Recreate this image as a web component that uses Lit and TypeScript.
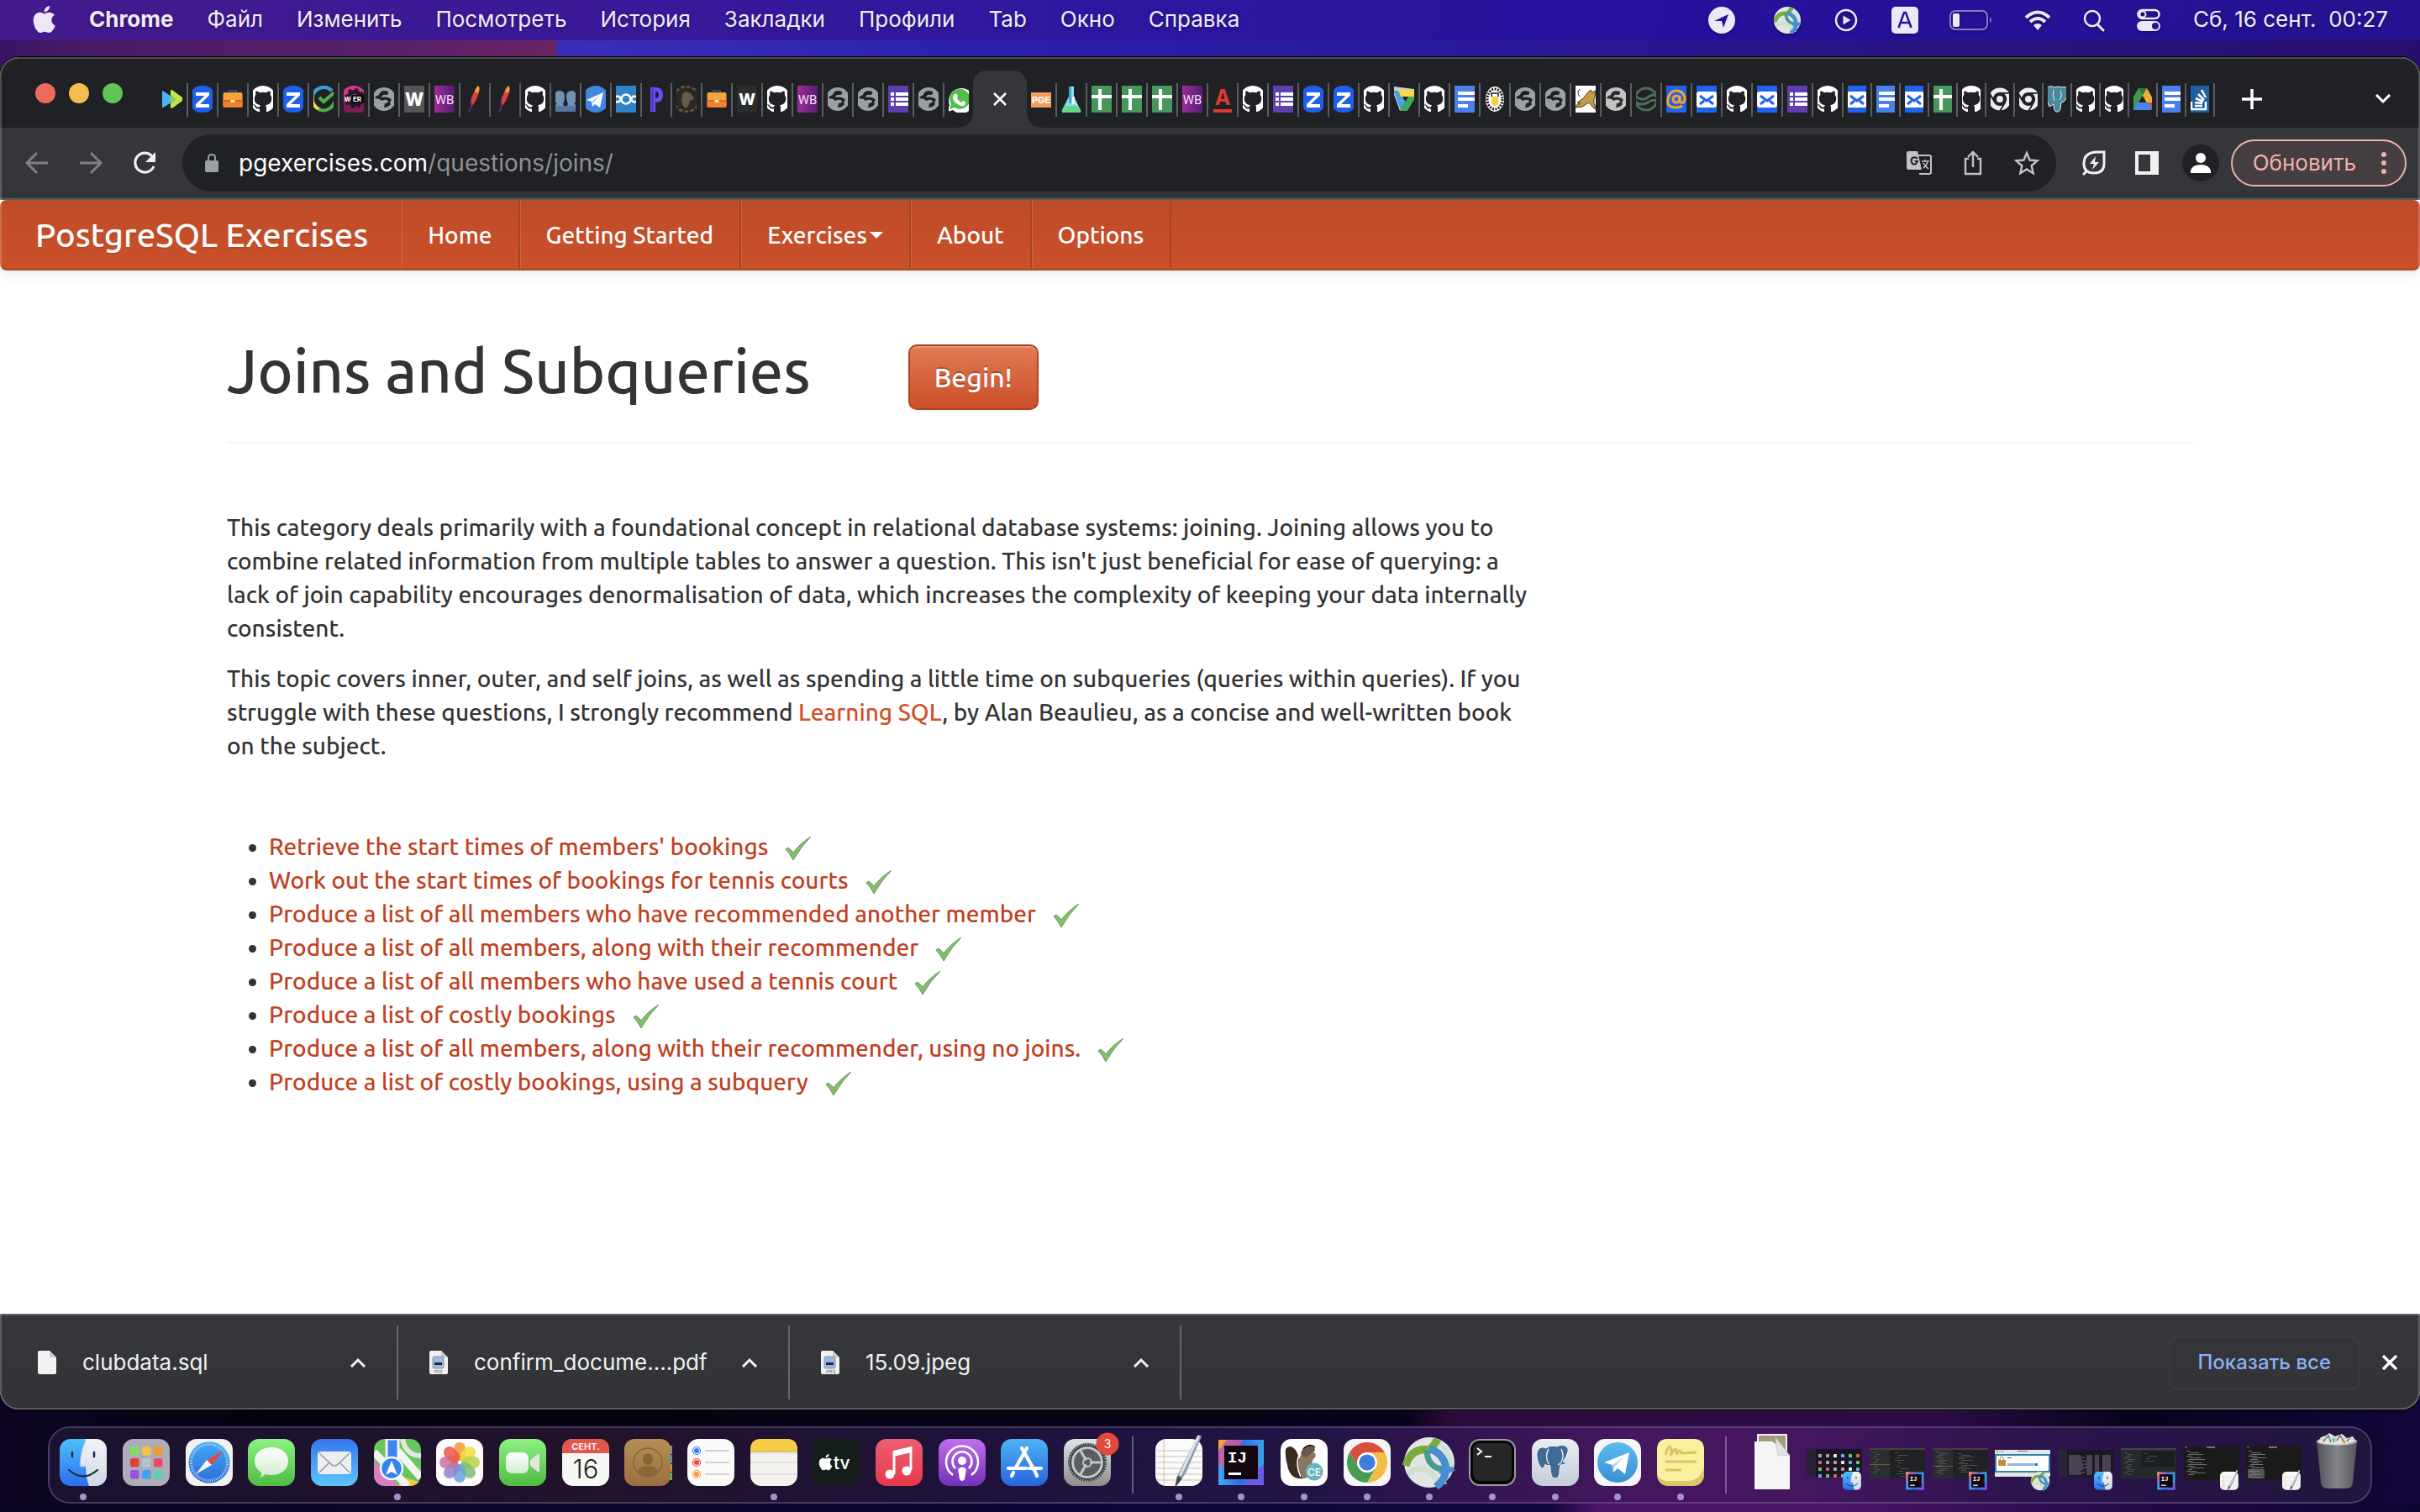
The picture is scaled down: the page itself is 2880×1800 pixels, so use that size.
import { LitElement, html, css, svg, nothing, SVGTemplateResult } from "lit";
import { customElement } from "lit/decorators.js";

const UI = css`"Inter", "Roboto", "Liberation Sans", sans-serif`;

/* ---------- shared artwork ---------- */

const APPLE =
  "M12.152 6.896c-.948 0-2.415-1.078-3.96-1.04-2.04.027-3.91 1.183-4.961 3.014-2.117 3.675-.546 9.103 1.519 12.09 1.013 1.454 2.208 3.09 3.792 3.039 1.52-.065 2.09-.987 3.935-.987 1.831 0 2.35.987 3.96.948 1.637-.026 2.676-1.48 3.676-2.948 1.156-1.688 1.636-3.325 1.662-3.415-.039-.013-3.182-1.221-3.22-4.857-.026-3.04 2.48-4.494 2.597-4.559-1.429-2.09-3.623-2.324-4.39-2.376-2-.156-3.675 1.09-4.61 1.09zM15.53 3.83c.843-1.012 1.4-2.427 1.245-3.83-1.207.052-2.662.805-3.532 1.818-.78.896-1.454 2.338-1.273 3.714 1.338.104 2.715-.688 3.559-1.701";
const OCTOCAT =
  "M8 0C3.58 0 0 3.58 0 8c0 3.54 2.29 6.53 5.47 7.59.4.07.55-.17.55-.38 0-.19-.01-.82-.01-1.49-2.01.37-2.53-.49-2.69-.94-.09-.23-.48-.94-.82-1.13-.28-.15-.68-.52-.01-.53.63-.01 1.08.58 1.23.82.72 1.21 1.87.87 2.33.66.07-.52.28-.87.51-1.07-1.78-.2-3.64-.89-3.64-3.95 0-.87.31-1.59.82-2.15-.08-.2-.36-1.02.08-2.12 0 0 .67-.21 2.2.82.64-.18 1.32-.27 2-.27s1.36.09 2 .27c1.53-1.04 2.2-.82 2.2-.82.44 1.1.16 1.92.08 2.12.51.56.82 1.27.82 2.15 0 3.07-1.87 3.75-3.65 3.95.29.25.54.73.54 1.48 0 1.07-.01 1.93-.01 2.2 0 .21.15.46.55.38A8.01 8.01 0 0 0 16 8c0-4.42-3.58-8-8-8z";
const CHROME_PART = "M-17.32 -10A20 20 0 0 1 17.32 -10L0 -10A10 10 0 0 0 -8.66 5Z";
const ELEPHANT =
  "M18 20c-6-3-12 1-11 10 1 7 4 14 7 14 2 0 2-3 3-5 1 2 3 2 5 1l1 3c0 5 1 13 6 13 4 0 5-5 5-10l1-6c3 0 6-1 8-3-2 0-4 0-5-1 4-5 8-14 5-17-3-3-8-3-12-1-5-1-9-1-13 2Z";

const arc = (id: string, stops: string[], vertical = true) => svg`
  <linearGradient id=${id} x1="0" y1="0" x2=${vertical ? 0 : 1} y2=${vertical ? 1 : 0}>
    ${stops.map((c, i) => svg`<stop offset=${i / (stops.length - 1)} stop-color=${c} />`)}
  </linearGradient>`;

const ball = (x: number, y: number, s: number) => svg`
  <g transform="translate(${x} ${y}) scale(${s})">
    <circle cx="30" cy="30" r="30" fill="#e3e4e4"/>
    <path d="M4 44Q22 30 36 46Q40 54 50 52" fill="none" stroke="#cfe0cf" stroke-width="7"/>
    <path d="M38 4Q54 14 56 34" fill="none" stroke="#cfe3da" stroke-width="5"/>
    <path d="M2 34Q8 12 30 15Q36 10 40 2" fill="none" stroke="#76ad3d" stroke-width="9"/>
    <path d="M27 15Q27 30 38 36Q44 39 52 36" fill="none" stroke="#4a9a8c" stroke-width="7"/>
    <path d="M30 14Q46 18 50 36Q50 50 38 59" fill="none" stroke="#4790cf" stroke-width="9"/>
    <path d="M42 40Q52 42 59 37" fill="none" stroke="#4790cf" stroke-width="6"/>
  </g>`;

/* ---------- favicons, drawn on a 32 x 32 grid ---------- */

const FAV: Record<string, SVGTemplateResult> = {
  arrows: svg`<path d="M3 5l14 9v5L3 27z" fill="#4fb4f5"/><path d="M14 5.5q1-1 2.500 0L28 14q2 2 0 4l-11.500 8.500q-2.500 1-2.500-1z" fill="#c0ea4b"/><path d="M14 11l7 5-7 6z" fill="#8fc95a"/>`,
  z: svg`<rect x="2" y="0" width="28" height="32" rx="12" fill="#1f5fee"/><path d="M8 8h16v3.500L13 22h11v4H8v-4L18.500 12H8z" fill="#fff"/>`,
  brief: svg`<path d="M12 9V6h8v3" fill="none" stroke="#2c4c8c" stroke-width="2"/><rect x="4.500" y="8" width="23" height="18" rx="2" fill="#f5a23a"/><path d="M4.500 18h23v6q0 2-2 2h-19q-2 0-2-2z" fill="#ef8130"/><rect x="4.500" y="17" width="23" height="2" fill="#d9642a"/><rect x="13.500" y="17" width="5" height="3" fill="#ffe9a0"/>`,
  gh: svg`<path d=${OCTOCAT} transform="scale(2)" fill="#fff"/>`,
  check: svg`<path d="M26 6A13.500 13.500 0 0 0 3 14" fill="none" stroke="#3f9be0" stroke-width="4"/><path d="M3 13A13.500 13.500 0 0 0 12 28.500" fill="none" stroke="#eadf45" stroke-width="4"/><path d="M10 28A13.500 13.500 0 0 0 29 19" fill="none" stroke="#4fae48" stroke-width="4"/><path d="M11 14l5 5 13-11" fill="none" stroke="#52b04a" stroke-width="4"/>`,
  weri: svg`<circle cx="16" cy="16" r="16" fill="#d2358f"/><path d="M0 19h32a16 16 0 0 1-32 0z" fill="#7d1d55"/><circle cx="17" cy="15" r="7.500" fill="none" stroke="#231a20" stroke-width="5"/><circle cx="17" cy="15" r="10.500" fill="none" stroke="#231a20" stroke-width="3" stroke-dasharray="4 4.250"/><rect x="13" y="11" width="18" height="10" rx="2" fill="#0b0b0c"/><text x="5" y="19" font-size="7" font-weight="700" fill="#fff">W</text><text x="15" y="19" font-size="8" font-weight="700" fill="#fff">ER</text>`,
  globe: svg`<circle cx="16" cy="16" r="14" fill="#9aa0a6"/><path d="M17 6q-6 0-7 5-4 1-5 4l6 1q1 3 5 1 2-1 5 1 0 3-4 3l-1 5q5 0 8-4-2-2 1-5-2-3-5-3-4-1-7 0 1-4 5-3 4 0 3-4z" fill="#202124"/>`,
  globe2: svg`<circle cx="16" cy="16" r="14" fill="#c3c3c3"/><path d="M17 6q-6 0-7 5-4 1-5 4l6 1q1 3 5 1 2-1 5 1 0 3-4 3l-1 5q5 0 8-4-2-2 1-5-2-3-5-3-4-1-7 0 1-4 5-3 4 0 3-4z" fill="#2c2d2f"/>`,
  w: svg`<rect width="32" height="32" fill="#565656"/><text x="16" y="24" text-anchor="middle" font-size="21" font-weight="800" fill="#fff">W</text>`,
  w2: svg`<rect width="32" height="32" fill="#2c2c2c"/><text x="16" y="23" text-anchor="middle" font-size="19" font-weight="800" fill="#fff">W</text>`,
  wb: svg`<rect width="32" height="32" fill="url(#fwb)"/><text x="16" y="22" text-anchor="middle" font-family="Roboto" font-size="15" fill="#f6dcf6">WB</text>`,
  feather: svg`<path d="M20 0q3 3 0 11-3 9-8 14-2-7 2-15 3-8 6-10z" fill="#d8433a"/><path d="M20 0q3 3 0 9l-4-2q2-5 4-7z" fill="#f0a03a"/><path d="M11 18l1 7-3 6" fill="none" stroke="#5b2c7a" stroke-width="2"/>`,
  people: svg`<path d="M2 31v-4q0-4 4-5-3-3-3-9 0-7 6-7t6 7q0 5-2 9l1 1V31zM18 31v-8l1-1q-2-4-2-9 0-7 6-7t6 7q0 6-3 9 4 1 4 5v4z" fill="#6f93b4"/><path d="M2 31v-5q4-3 10-2l8 0q6-1 10 2v5z" fill="#5577a0"/>`,
  tg: svg`<circle cx="16" cy="16" r="16" fill="#4286e0"/><path d="M5 17L25 8l-4 18-6-4-3 3-1-6z" fill="#fff"/><path d="M11 19l10-8-8 10z" fill="#a9c9f2"/>`,
  node: svg`<rect width="32" height="32" fill="#2f83c5"/><circle cx="16" cy="16" r="5.500" fill="none" stroke="#fff" stroke-width="2.500"/><circle cx="6" cy="16" r="3.500" fill="none" stroke="#fff" stroke-width="2.500"/><circle cx="26" cy="16" r="3.500" fill="none" stroke="#fff" stroke-width="2.500"/>`,
  p: svg`<path d="M9 31V2h6q9 0 9 9t-9 9v11z" fill="#6c4df0"/><path d="M15 7v8q4 0 4-4t-4-4z" fill="#202124"/><path d="M11.500 3v27" stroke="#3f2ab0" stroke-width="1.500"/>`,
  coin: svg`<circle cx="16" cy="16" r="15" fill="#2b2722" stroke="#5c5244" stroke-width="3" stroke-dasharray="5 2"/><path d="M12 8q8-2 11 4l2 4-5 2q-1 7-5 9-8-6-3-19z" fill="#655a49"/>`,
  forms: svg`<rect width="32" height="32" fill="#5f3fae"/><g fill="#fff"><rect x="7" y="8" width="4" height="4"/><rect x="13" y="8" width="15" height="4"/><rect x="7" y="14" width="4" height="4"/><rect x="13" y="14" width="15" height="4"/><rect x="7" y="20" width="4" height="4"/><rect x="13" y="20" width="15" height="4"/></g>`,
  wa: svg`<path d="M2 31l3-8A15 15 0 1 1 9 29z" fill="#fff"/><path d="M5 28l2-6a12 12 0 1 1 4 4z" fill="#4dc247"/><path d="M11 10q2-2 4 2l-1 3q2 4 5 5l2-2q4 1 3 4-3 4-8 1-7-4-7-9 0-3 2-4z" fill="#fff"/>`,
  pge: svg`<rect y="8" width="32" height="18" fill="#f0a05a"/><text x="16" y="21" text-anchor="middle" font-size="11" font-weight="700" fill="#fff">PGE</text>`,
  flask: svg`<path d="M13 1h6v12l8 16q1 3-2 3H7q-3 0-2-3l8-16z" fill="#8fdcf5"/><path d="M8 24h16l3 5q1 3-2 3H7q-3 0-2-3z" fill="#66d68a"/><path d="M13 1h3v20h-3z" fill="#4aa6c9"/><path d="M17 13h3v9h-3z" fill="#e8fbff"/>`,
  sheets: svg`<rect width="32" height="32" fill="#47975b"/><path d="M12 4h4v7h12v4H16v14h-4V15H4v-4h8z" fill="#fff"/>`,
  a: svg`<text x="16" y="23" text-anchor="middle" font-size="25" font-weight="700" fill="#df3a2f">A</text><rect x="5" y="28" width="22" height="4" fill="#df3a2f"/>`,
  tri: svg`<path d="M1 2l10 3 3 24-3 1z" fill="#d7dadf"/><path d="M3 5l9 25 6-10-8-14z" fill="#4aa0e0"/><path d="M9 5h21v8H12z" fill="#fbd74b"/><path d="M30 13l-10 17h-9l10-17z" fill="#3fa75a"/><path d="M3 1l25 3v1H6z" fill="#c9ccd0"/>`,
  docs: svg`<rect width="32" height="32" fill="#4a80ec"/><g fill="#fff"><rect x="8" y="7" width="20" height="4"/><rect x="8" y="14" width="20" height="4"/><rect x="8" y="22" width="12" height="4"/></g>`,
  badge: svg`<ellipse cx="16" cy="16" rx="11" ry="15" fill="#fff"/><ellipse cx="16" cy="16" rx="9" ry="12" fill="none" stroke="#1c1c1c" stroke-width="3" stroke-dasharray="2 1.500"/><path d="M12 13h8v9l-4 2-4-2z" fill="#f4d23c"/><path d="M12 13V9h8v4" fill="none" stroke="#1c1c1c" stroke-width="1.500"/>`,
  cat: svg`<rect width="32" height="32" fill="#fff"/><path d="M6 20q8-4 12-11l4-4 2 3 4-2-1 7q-2 4-1 8l3 8-4-3-5-6-8 5-8 1 5-4z" fill="#c89b4b" stroke="#4a3a20"/><path d="M4 24l6-4M9 4q-4 4 0 9" stroke="#333" fill="none"/>`,
  green: svg`<circle cx="16" cy="16" r="13" fill="none" stroke="#4a7058" stroke-width="3"/><path d="M4 13q8 6 14 1t10-2M4 20q8 4 14 0t10-2" fill="none" stroke="#4a7058" stroke-width="3"/>`,
  at: svg`<rect width="32" height="32" fill="#1f63ee"/><circle cx="16" cy="16" r="4" fill="none" stroke="#f6a623" stroke-width="3"/><path d="M20 12v6q1 3 4 2 3-2 2-6-2-8-10-8T6 16t10 10q4 0 7-2" fill="none" stroke="#f6a623" stroke-width="3"/>`,
  mail: svg`<rect width="32" height="32" fill="#1f63ee"/><rect x="4" y="7" width="24" height="19" rx="3" fill="#fff"/><path d="M8 12l8 6 8-6M8 22l5-4M24 22l-5-4" fill="none" stroke="#1f63ee" stroke-width="3"/>`,
  chrome: svg`<g transform="translate(16 16) scale(.72)"><g fill="#eceded" stroke="#202124" stroke-width="2.500"><path d=${CHROME_PART}/><path d=${CHROME_PART} transform="rotate(120)"/><path d=${CHROME_PART} transform="rotate(240)"/></g><circle r="7" fill="#eceded" stroke="#202124" stroke-width="3"/></g>`,
  pg: svg`<path d="M3 3q5-4 10-1 4-2 8 0 6-2 8 3 1 7-5 14l-3 1-1 7q-1 5-5 4-3-1-3-9l-5 3Q3 18 3 3z" fill="#4b8a9c" stroke="#e8eef2"/><path d="M12 5q-2 7 1 13M20 6q3 6-1 11" fill="none" stroke="#e8eef2"/>`,
  drive: svg`<path d="M11 3h10l10 18H21z" fill="#f2ae34"/><path d="M11 3L0 22l5 8L17 10z" fill="#3c9b4c"/><path d="M11 3h10l-5 8z" fill="#237a3a"/><path d="M5 29l5-9h21l-5 9z" fill="#4a85ee"/><path d="M25 20h6l-5 9z" fill="#dd4a3a"/>`,
  so: svg`<rect width="32" height="32" fill="#215f9e"/><path d="M6 19v9h17v-9M10 24h9M10 20l9 1M11 15l9 4M14 10l7 7M18 5l5 9" fill="none" stroke="#fff" stroke-width="2.500"/>`,
};

const LEFT = "arrows z brief gh z check weri globe w wb feather feather gh people tg node p coin brief w2 gh wb globe globe forms globe wa".split(" ");
const RIGHT = "pge flask sheets sheets sheets wb a gh forms z z gh tri gh docs badge globe globe cat globe2 green at mail gh mail forms gh".split(" ");
const NARROW = "mail docs mail sheets gh chrome chrome pg gh gh drive docs so".split(" ");

/* ---------- menu bar ---------- */

@customElement("menu-bar")
class MenuBar extends LitElement {
  static styles = css`
    :host { display: flex; align-items: center; height: 48px; padding: 0 38px; color: #efecf7;
      font: 400 26px/46px ${UI}; text-shadow: 0 2px 4px rgba(0, 0, 0, 0.3);
      background: linear-gradient(90deg, #431a8c 0%, #3b1a97 22%, #2e17a0 45%, #26119c 70%, #251391 100%); }
    nav, .status { display: flex; align-items: center; }
    nav { gap: 40px; }
    button { all: unset; }
    button, time { padding-bottom: 2px; }
    .app { font-weight: 700; }
    .status { margin-left: auto; }
    svg { display: block; }
    .status svg { filter: drop-shadow(0 2px 2px rgba(0, 0, 0, 0.3)); }
    .g46 { margin-left: 46px; } .g40 { margin-left: 40px; } .g37 { margin-left: 37px; }
    time { white-space: pre; margin-left: 39px; }
  `;
  render() {
    const c = "#ece8f7";
    return html`
      <nav aria-label="Menu">
        <button aria-label="Apple"><svg width="28" height="32" viewBox="1 0 21 24"><path d=${APPLE} fill=${c} /></svg></button>
        <button class="app">Chrome</button>
        ${["Файл", "Изменить", "Посмотреть", "История", "Закладки", "Профили", "Tab", "Окно", "Справка"].map((t) => html`<button>${t}</button>`)}
      </nav>
      <div class="status">
        <svg width="32" height="32" viewBox="0 0 32 32"><circle cx="16" cy="16" r="16" fill=${c} /><path d="M7 17L24 9l-6 16-2-8z" fill="#27129a" /></svg>
        <svg class="g46" width="32" height="32" viewBox="0 0 60 60">${ball(0, 0, 1)}</svg>
        <svg class="g40" width="28" height="28" viewBox="0 0 28 28"><circle cx="14" cy="14" r="12" fill="none" stroke=${c} stroke-width="2.500" /><path d="M10.500 8.500l9 5.500-9 5.500z" fill=${c} /></svg>
        <svg class="g40" width="32" height="32" viewBox="0 0 32 32"><rect width="32" height="32" rx="5" fill=${c} /><path d="M8.500 25L15 7h2l6.500 18M11 19h10" fill="none" stroke="#27129a" stroke-width="2.500" /></svg>
        <svg class="g37" width="52" height="24" viewBox="0 0 52 24"><rect x="1" y="1" width="44" height="22" rx="6" fill="none" stroke="#8578c4" stroke-width="2" /><rect x="4" y="4" width="8" height="16" rx="2" fill=${c} /><path d="M48 8q4 4 0 8z" fill="#8578c4" /></svg>
        <svg class="g37" width="32" height="24" viewBox="0 0 32 24"><g fill="none" stroke=${c} stroke-width="4"><path d="M2 9q14-13 28 0" /><path d="M7 14q9-8 18 0" /></g><path d="M11 18q5-4 10 0l-5 6z" fill=${c} /></svg>
        <svg class="g37" width="28" height="28" viewBox="0 0 28 28"><circle cx="12" cy="12" r="9" fill="none" stroke=${c} stroke-width="2.500" /><path d="M18 19l7 7" stroke=${c} stroke-width="3" stroke-linecap="round" /></svg>
        <svg class="g37" width="28" height="28" viewBox="0 0 28 28"><rect x="1.500" y="2" width="25" height="10" rx="5" fill="none" stroke=${c} stroke-width="2.500" /><circle cx="7" cy="7" r="3.500" fill="none" stroke=${c} stroke-width="2" /><rect y="15" width="28" height="12" rx="6" fill=${c} /><circle cx="22" cy="21" r="4" fill="#27129a" /></svg>
        <time>Сб, 16 сент.  00:27</time>
      </div>`;
  }
}

/* ---------- browser chrome ---------- */

@customElement("tab-strip")
class TabStrip extends LitElement {
  static styles = css`
    :host { display: flex; height: 84px; background: #202124; font-family: ${UI}; }
    button { all: unset; box-sizing: content-box; flex: none; display: flex; align-items: center; justify-content: center; }
    .lights { display: flex; gap: 16px; padding: 31px 42px 0; }
    .lights button { width: 24px; height: 24px; border-radius: 50%; }
    .r { background: #ee6a5f; } .y { background: #f5bd4f; } .g { background: #61c454; }
    .tab { width: 34px; height: 40px; margin-top: 31px; border-right: 2px solid #5c5d60; }
    .tab svg { display: block; overflow: hidden; margin-top: -2px; }
    .narrow { width: 32px; }
    .last { border: 0; }
    .active { position: relative; width: 64px; height: 68px; margin-top: 16px; border-radius: 16px 16px 0 0; background: #35363a; }
    .active::before, .active::after { content: ""; position: absolute; bottom: 0; width: 16px; height: 16px; }
    .active::before { right: 100%; background: radial-gradient(circle at 0 0, #202124 15px, #35363a 16px); }
    .active::after { left: 100%; background: radial-gradient(circle at 100% 0, #202124 15px, #35363a 16px); }
    .plus { margin: 16px 0 0 28px; width: 32px; }
    .more { margin: 16px 28px 0 auto; width: 32px; }
  `;
  tab(name: string, cls = "") {
    return html`<button class="tab ${cls}" aria-label="Tab">
      <svg width=${cls === "narrow" ? 22 : 24} height="32" viewBox=${cls === "narrow" ? "5 0 22 32" : "4 0 24 32"}>
        <defs>${arc("fwb", ["#a9309b", "#471a72"], false)}</defs>${FAV[name]}
      </svg>
    </button>`;
  }
  render() {
    return html`
      <div class="lights"><button class="r" aria-label="Close"></button><button class="y" aria-label="Minimise"></button><button class="g" aria-label="Zoom"></button></div>
      ${LEFT.map((n, i) => this.tab(n, i === LEFT.length - 1 ? "last" : ""))}
      <button class="active" aria-label="Close tab"><svg width="16" height="16" viewBox="0 0 16 16"><path d="M1 1l14 14M15 1L1 15" stroke="#fff" stroke-width="2.500" /></svg></button>
      ${RIGHT.map((n) => this.tab(n))} ${NARROW.map((n) => this.tab(n, "narrow"))}
      <button class="plus" aria-label="New tab"><svg width="24" height="24" viewBox="0 0 24 24"><path d="M12 0v24M0 12h24" stroke="#fff" stroke-width="3.500" /></svg></button>
      <button class="more" aria-label="Search tabs"><svg width="20" height="12" viewBox="0 0 20 12"><path d="M2 1l8 8 8-8" fill="none" stroke="#fff" stroke-width="3" /></svg></button>`;
  }
}

@customElement("tool-bar")
class ToolBar extends LitElement {
  static styles = css`
    :host { display: flex; align-items: center; height: 84px; padding: 0 16px 0 28px; background: #35363a;
      border-bottom: 2px solid #5f6063; font: 400 28px/36px ${UI}; }
    button { all: unset; flex: none; }
    svg { display: block; flex: none; }
    .nav { margin-right: 32px; }
    .omni { display: flex; align-items: center; flex: 1; height: 68px; border-radius: 34px; background: #202124;
      padding: 0 20px 0 26px; margin: 0 30px 0 -3px; }
    .url { flex: 1; margin-left: 23px; color: #8f9194; }
    .url b { font-weight: 400; color: #fff; }
    .in { margin-left: 35px; }
    .out { margin-right: 34px; }
    .who { width: 44px; height: 44px; border-radius: 50%; background: #202124; display: grid; place-items: center; margin: 0 14px 0 -6px; }
    .update { display: flex; align-items: center; gap: 30px; box-sizing: border-box; height: 56px; padding: 0 22px 0 24px;
      border: 2px solid #efb2aa; border-radius: 28px; background: #463f42; color: #efb2aa; font-size: 26px; }
  `;
  render() {
    return html`
      <button class="nav" aria-label="Back"><svg width="32" height="32" viewBox="0 0 32 32"><path d="M29 16H5M16 4L4 16l12 12" fill="none" stroke="#7f8083" stroke-width="3" /></svg></button>
      <button class="nav" aria-label="Forward"><svg width="32" height="32" viewBox="0 0 32 32"><path d="M3 16h24M16 4l12 12-12 12" fill="none" stroke="#7f8083" stroke-width="3" /></svg></button>
      <button class="nav" aria-label="Reload"><svg width="32" height="32" viewBox="0 0 32 32"><path d="M25 8A11.500 11.500 0 1 0 27 20" fill="none" stroke="#f1f1f2" stroke-width="3.200" /><path d="M29 3v12H17z" fill="#f1f1f2" /></svg></button>
      <div class="omni">
        <svg width="18" height="22" viewBox="0 0 18 22"><rect x="1" y="8" width="16" height="14" rx="2" fill="#9aa0a6" /><path d="M5 9V5q0-4 4-4t4 4v4" fill="none" stroke="#9aa0a6" stroke-width="2" /></svg>
        <span class="url"><b>pgexercises.com</b>/questions/joins/</span>
        <button class="in" aria-label="Translate"><svg width="30" height="30" viewBox="0 0 30 30"><path d="M14 6h13q2 0 2 2v18q0 2-2 2H15" fill="none" stroke="#c2c3c5" stroke-width="2" /><path d="M2 1h11l5 22H2q-2 0-2-2V3q0-2 2-2z" fill="#c2c3c5" /><path d="M13 10q-3-3-6-1-3 3 0 7 4 2 6-3H9.500" fill="none" stroke="#202124" stroke-width="2" /><path d="M18 13h9M22 11v2M25 13q-1 5-5 8M20 15q2 4 6 7" fill="none" stroke="#c2c3c5" stroke-width="1.600" /></svg></button>
        <button class="in" aria-label="Share"><svg width="28" height="30" viewBox="0 0 28 30"><path d="M9 10H5v18h18V10h-4M14 20V3M8 8l6-6 6 6" fill="none" stroke="#c2c3c5" stroke-width="2.400" /></svg></button>
        <button class="in" aria-label="Bookmark"><svg width="30" height="30" viewBox="0 0 30 30"><path d="M15 3l3.500 8.500 9 .8-6.800 6 2 9L15 22.500 7.300 27.300l2-9-6.800-6 9-.8z" fill="none" stroke="#c2c3c5" stroke-width="2.400" /></svg></button>
      </div>
      <button class="out" aria-label="Energy saver"><svg width="30" height="30" viewBox="0 0 30 30"><path d="M27 2v14q0 11-12 11Q3 27 3 16 3 2 19 2z" fill="none" stroke="#f1f1f2" stroke-width="3" /><path d="M7 24l-5 5" stroke="#f1f1f2" stroke-width="3" /><path d="M17 7l-7 9h5l-2 7 8-9h-5z" fill="#f1f1f2" /></svg></button>
      <button class="out" aria-label="Side panel"><svg width="28" height="28" viewBox="0 0 28 28"><path d="M0 0h28v28H0zM4 4v20h14V4z" fill="#f1f1f2" fill-rule="evenodd" /></svg></button>
      <button class="who" aria-label="Profile"><svg width="26" height="26" viewBox="0 0 26 26"><circle cx="13" cy="7" r="6" fill="#fff" /><path d="M1 25v-3q2-7 12-7t12 7v3z" fill="#fff" /></svg></button>
      <button class="update">Обновить<svg width="6" height="28" viewBox="0 0 6 28"><g fill="#efb2aa"><circle cx="3" cy="4" r="3" /><circle cx="3" cy="14" r="3" /><circle cx="3" cy="24" r="3" /></g></svg></button>`;
  }
}

/* ---------- web page ---------- */

const EXERCISES = [
  "Retrieve the start times of members' bookings",
  "Work out the start times of bookings for tennis courts",
  "Produce a list of all members who have recommended another member",
  "Produce a list of all members, along with their recommender",
  "Produce a list of all members who have used a tennis court",
  "Produce a list of costly bookings",
  "Produce a list of all members, along with their recommender, using no joins.",
  "Produce a list of costly bookings, using a subquery",
];

@customElement("joins-page")
class JoinsPage extends LitElement {
  static styles = css`
    :host { display: block; background: #fff; color: #333; font: 460 28px/40px "Ubuntu", "Noto Sans", "Open Sans", sans-serif; }
    a { color: #c0401f; text-decoration: none; }
    .bar { display: flex; align-items: stretch; height: 82px; border-bottom: 2px solid #b04825; border-radius: 8px;
      background: linear-gradient(#be4b28, #ca512b); box-shadow: 0 2px 16px rgba(0, 0, 0, 0.12); }
    .bar a { display: flex; align-items: center; padding: 2px 31px 0; color: #fff; border-right: 2px solid #a9431f; box-shadow: inset 1px 0 #cf6643; }
    .bar a.brand { padding: 2px 40px 0 42px; font-size: 40px; border: 0; box-shadow: none; text-shadow: 0 2px 0 rgba(0, 0, 0, 0.1); }
    .caret { margin-left: 3px; border: 8px solid transparent; border-top-color: #fff; border-bottom: 0; }
    main { max-width: 2340px; margin: 0 auto; padding-top: 76px; }
    header { display: flex; align-items: flex-start; gap: 116px; height: 128px; border-bottom: 2px solid #f5f5f5; }
    h1 { margin: 0; font-size: 72px; line-height: 88px; font-weight: 460; }
    .begin { all: unset; box-sizing: border-box; height: 78px; margin-top: 12px; padding: 0 29px; border: 2px solid #ad4522; border-radius: 10px; color: #fff;
      font-size: 32px; line-height: 74px; text-shadow: 0 -2px 0 rgba(0, 0, 0, 0.25);
      background: linear-gradient(#e07b55, #cb4f27); box-shadow: inset 0 2px 0 rgba(255, 255, 255, 0.2), 0 2px 4px rgba(0, 0, 0, 0.05); }
    .intro { width: 1560px; max-width: 100%; margin-top: 80px; }
    p { margin: 0 0 20px; }
    .intro a { color: #d0502a; }
    ul { margin: 80px 0 0; padding-left: 50px; }
    li svg { margin-left: 21px; vertical-align: -6px; }
  `;
  render() {
    return html`
      <nav class="bar">
        <a class="brand" href="#">PostgreSQL Exercises</a>
        <a href="#">Home</a><a href="#">Getting Started</a><a href="#">Exercises<span class="caret"></span></a><a href="#">About</a><a href="#">Options</a>
      </nav>
      <main>
        <header><h1>Joins and Subqueries</h1><button class="begin">Begin!</button></header>
        <div class="intro">
          <p>This category deals primarily with a foundational concept in relational database systems: joining. Joining allows you to<br />combine related information from multiple tables to answer a question. This isn't just beneficial for ease of querying: a<br />lack of join capability encourages denormalisation of data, which increases the complexity of keeping your data internally<br />consistent.</p>
          <p>This topic covers inner, outer, and self joins, as well as spending a little time on subqueries (queries within queries). If you<br />struggle with these questions, I strongly recommend <a href="#">Learning SQL</a>, by Alan Beaulieu, as a concise and well-written book<br />on the subject.</p>
        </div>
        <ul>
          ${EXERCISES.map((t) => html`<li><a href="#">${t}</a><svg width="30" height="28" viewBox="0 0 30 28"><path d="M0 15l3-2q4 3 6 6Q17 8 30 0 18 12 9 28 5 20 0 15z" fill="#83be6c" stroke="#5f9a5a" /></svg></li>`)}
        </ul>
      </main>`;
  }
}

/* ---------- downloads ---------- */

@customElement("download-shelf")
class DownloadShelf extends LitElement {
  static styles = css`
    :host { display: flex; align-items: center; height: 112px; border-top: 2px solid #5f6063; background: linear-gradient(#36373b, #323336); color: #f1f1f2; font: 400 26px/36px ${UI}; }
    button { all: unset; flex: none; }
    svg { display: block; flex: none; }
    .item { display: flex; align-items: center; box-sizing: border-box; width: 466px; height: 88px; padding: 0 36px 0 37px; border-right: 2px solid #67686b; }
    .item:first-child { width: 474px; padding-left: 45px; }
    .name { flex: 1; margin-left: 31px; }
    .all { margin-left: auto; box-sizing: border-box; height: 64px; padding: 0 32px; border: 2px solid #3a3c40; border-radius: 8px; font-size: 24px; font-weight: 500; line-height: 58px; color: #8ab0f5; }
    .close { margin: 0 26px; }
  `;
  render() {
    const files: [string, string][] = [["clubdata.sql", ""], ["confirm_docume....pdf", "PDF"], ["15.09.jpeg", "JPEG"]];
    return html`
      ${files.map(
        ([n, kind]) => html`<div class="item">
          <svg width="22" height="28" viewBox="0 0 22 28"><path d="M2 0h12l8 8v18q0 2-2 2H2q-2 0-2-2V2q0-2 2-2z" fill="#f2f2f2" /><path d="M14 0l8 8h-8z" fill="#c9c9c9" />
            ${kind ? svg`<rect x="4" y="7" width="13" height="14" rx="2" fill="#9bb9e6" stroke="#8a8f98"/><rect x="6" y="14" width="9" height="3" fill="#1d2430"/><text x="11" y="27" text-anchor="middle" font-size="5" fill="#666">${kind}</text>` : nothing}
          </svg>
          <span class="name">${n}</span>
          <button aria-label="Options"><svg width="20" height="12" viewBox="0 0 20 12"><path d="M2 11l8-8 8 8" fill="none" stroke="#f1f1f2" stroke-width="3" /></svg></button>
        </div>`
      )}
      <button class="all">Показать все</button>
      <button class="close" aria-label="Close"><svg width="20" height="20" viewBox="0 0 20 20"><path d="M2 2l16 16M18 2L2 18" stroke="#fff" stroke-width="3.200" /></svg></button>`;
  }
}

/* ---------- dock, icons drawn on a 56 x 56 grid ---------- */

const tile = (fill: string) => svg`<rect width="56" height="56" rx="13" fill=${fill} />`;
const rotated = (n: number, f: (a: number, i: number) => SVGTemplateResult) => Array.from({ length: n }, (_, i) => f((360 / n) * i, i));
const GRID = ["#7ee05f", "#f5c33c", "#ef9a2f", "#e0423a", "#b7c3cb", "#f0466a", "#9a51e0", "#3ba5f2", "#5ed0b0"];
const PETALS = ["#f29b38", "#f0dc3e", "#b9d24a", "#7cbf75", "#66a8dc", "#8f84cf", "#c9719f", "#ea5a45"];

const finder = svg`
  <clipPath id="tileclip"><rect width="56" height="56" rx="13" /></clipPath>
  <g clip-path="url(#tileclip)"><rect width="56" height="56" fill="url(#blue)"/><path d="M31 0Q24 16 24 33h7q0 12 4 23h21V0z" fill="url(#paper)"/></g>
  <path d="M15 16v5M41 16v5" stroke="#1c2a40" stroke-width="2.500" stroke-linecap="round"/><path d="M11 37q17 15 34 0" fill="none" stroke="#1c2a40" stroke-width="2.200" stroke-linecap="round"/>
  <path d="M31 2Q24 16 24 33h7" fill="none" stroke="#8ab4e0" stroke-width="1"/>`;

const idea = svg`
  <rect x="1" y="1" width="54" height="54" fill="url(#idea)"/><path d="M1 1h30L8 34l-7-4z" fill="#f0508a" opacity=".7"/><path d="M1 1h10L1 14z" fill="#f9a13a"/><path d="M30 55h25V30z" fill="#6a5ae8"/>
  <rect x="8" y="8" width="40" height="40" fill="#14060f"/>
  <text x="12" y="28" font-family="Liberation Mono" font-weight="700" font-size="19" fill="#fff">IJ</text><rect x="13" y="40" width="15" height="3" fill="#fff"/>`;

const sheet = svg`
  ${tile("#fbfbfa")}<path d="M1 14h54M1 21h54M1 28h54M1 35h54M1 42h54M1 49h54" stroke="#c4c4c4" stroke-width="1.200"/><path d="M10 0v56" stroke="#f0a9a0"/>
  <path d="M51-5l4 2-19 44-9 13-2 4 2-16z" fill="#8a9cab"/><path d="M50-4L28 43l3 1L53-3z" fill="#d8e2ea"/><path d="M26 44l-3 14 9-11z" fill="#4a4a4a"/>`;

const DOCK: Record<string, SVGTemplateResult> = {
  finder,
  launchpad: svg`${tile("#aeacb8")}${GRID.map((c, i) => svg`<rect x=${9 + (i % 3) * 14} y=${9 + Math.floor(i / 3) * 14} width="10.500" height="10.500" rx="2.500" fill=${c}/>`)}`,
  safari: svg`${tile("#f1f1f1")}<circle cx="28" cy="28" r="24.500" fill="url(#safari)"/><circle cx="28" cy="28" r="21.500" fill="none" stroke="#cfe5fa" stroke-width="3" stroke-dasharray=".8 1.450"/><path d="M45 14L31 31l-6-6z" fill="#e5463c"/><path d="M12 42l13-17 6 6z" fill="#f5f7fa"/>`,
  messages: svg`${tile("url(#green)")}<path d="M28 10c12 0 20 7 20 16.500S40 43 28 43q-4 0-7-1-3 3-7 4 3-3 2-6-8-5-8-13.500C8 17 16 10 28 10z" fill="url(#snow)"/>`,
  mail: svg`${tile("url(#mail)")}<rect x="8" y="15" width="40" height="27" rx="4" fill="#eceef0"/><path d="M10 17l15 14q3 2 6 0l15-14M10 40l12-12M46 40L34 28" fill="none" stroke="#9a9da3" stroke-width="1.600"/>`,
  maps: svg`<g clip-path="url(#tileclip)"><rect width="56" height="56" fill="#68c65f"/><path d="M0 26l30 30H0z" fill="#d97fc0"/><path d="M30 56V44L56 52v4z" fill="#f7c843"/><path d="M0 16l40 40M28 14l28 32" stroke="#f4f4f0" stroke-width="9"/><path d="M34 0q4 20 22 20" fill="none" stroke="#e4e4e0" stroke-width="6"/><path d="M15 0h14v24H15z" fill="#3d86f0" stroke="#f4f4f0" stroke-width="3"/></g><circle cx="21" cy="35" r="13" fill="#3583f3" stroke="#f6f6f6" stroke-width="2.500"/><path d="M21 26l7 17-7-4-7 4z" fill="#fff"/>`,
  photos: svg`${tile("#fcfcfc")}<g transform="translate(28 28)">${rotated(8, (a, i) => svg`<rect x="-7" y="-24" width="14" height="22" rx="7" fill=${PETALS[i]} opacity=".86" transform="rotate(${a})"/>`)}</g>`,
  facetime: svg`${tile("url(#green)")}<rect x="8" y="16" width="27" height="25" rx="7" fill="url(#snow)"/><path d="M37 25l9-7q2-1 2 1v19q0 2-2 1l-9-7z" fill="#dfe9dd"/>`,
  calendar: svg`${tile("#f7f7f5")}<path d="M0 17V13Q0 0 13 0h30q13 0 13 13v4z" fill="#e2574d"/><text x="28" y="13" text-anchor="middle" font-size="11" font-weight="700" fill="#fbeeee">СЕНТ.</text><text x="28" y="47" text-anchor="middle" font-size="31" font-weight="300" fill="#222">16</text>`,
  contacts: svg`<rect x="40" y="8" width="17" height="10" fill="#8a8a8a"/><rect x="40" y="19" width="17" height="10" fill="#4a93c9"/><rect x="40" y="30" width="17" height="9" fill="#e58a2e"/><rect x="40" y="40" width="17" height="9" fill="#5ab55a"/><rect width="55" height="56" rx="12" fill="url(#leather)"/><circle cx="28" cy="28" r="17" fill="none" stroke="#86673a" stroke-width="1.500"/><ellipse cx="28" cy="24" rx="6" ry="7" fill="#86673a"/><path d="M15 39q4-7 13-7t13 7q-5 6-13 6t-13-6z" fill="#86673a"/>`,
  reminders: svg`${tile("#fafaf9")}${["#2f7ff3", "#e8473e", "#f0992e"].map((c, i) => svg`<circle cx="11" cy=${14 + i * 14} r="4.500" fill="none" stroke=${c} stroke-width="1.200"/><circle cx="11" cy=${14 + i * 14} r="3" fill=${c}/><path d="M21 ${14 + i * 14}h29" stroke="#c4c4c2" stroke-width="1.500"/>`)}`,
  notes: svg`${tile("#f3f2ee")}<path d="M0 15V13Q0 0 13 0h30q13 0 13 13v2z" fill="#f8cd45"/><path d="M0 15h56" stroke="#c7a23a"/><path d="M0 17h56" stroke="#b9b9b6" stroke-dasharray="1 1.500"/><path d="M0 28h56M0 42h56" stroke="#cfcecb"/>`,
  tv: svg`${tile("#151e1b")}<path d=${APPLE} transform="translate(6 18) scale(.8)" fill="#fff"/><text x="25" y="36" font-size="21" font-weight="500" fill="#fff">tv</text>`,
  music: svg`${tile("url(#red)")}<path d="M22 42V16l20-5v26" fill="none" stroke="#fff" stroke-width="3"/><path d="M21 14l22-5v7l-22 5z" fill="#fff"/><circle cx="17" cy="42" r="5.500" fill="#fff"/><circle cx="37" cy="38" r="5.500" fill="#fff"/>`,
  podcasts: svg`${tile("url(#violet)")}<g fill="none" stroke="#fff" stroke-width="2.600"><path d="M17 43a19 19 0 1 1 22 0"/><path d="M20 35a11.500 11.500 0 1 1 16 0"/></g><circle cx="28" cy="26" r="5" fill="#fff"/><path d="M23 36q5-5 10 0l-2 12q-3 4-6 0z" fill="#fff"/>`,
  store: svg`${tile("url(#store)")}<path d="M31 11L18 34M25 11l16 28M9 35h21M34 35h14M15 40l-2 4M41 39l2 5" stroke="#fff" stroke-width="4.200" stroke-linecap="round"/>`,
  settings: svg`${tile("url(#steel)")}<circle cx="28" cy="28" r="23" fill="#35383a"/><circle cx="28" cy="28" r="22" fill="none" stroke="#9a9da0" stroke-width="3" stroke-dasharray="1.500 1.500"/><circle cx="28" cy="28" r="17.500" fill="#5b5e60" stroke="#c3c6c8" stroke-width="3"/><circle cx="28" cy="28" r="5" fill="none" stroke="#c3c6c8" stroke-width="2"/><g transform="translate(28 28)" stroke="#c3c6c8" stroke-width="3">${rotated(3, (a) => svg`<path d="M3 0h15" transform="rotate(${a})"/>`)}</g><circle cx="52" cy="6" r="13.500" fill="#e0493c"/><text x="52" y="11" text-anchor="middle" font-size="14" fill="#fff">3</text>`,
  textedit: sheet,
  idea,
  beaver: svg`${tile("#fff")}<path d="M6 12q6-7 13 3 5 10 2 20 2 8 6 12-16 2-19-16Q5 20 6 12z" fill="#3a2a22"/><path d="M22 24q3-9 10-12l9 5q2 4-2 7-3 6-2 12-2 12-10 11-9-8-5-23z" fill="#8b7563"/><path d="M24 17q3-9 11-10 6 1 6 7l-7 5q-2 4-7 2z" fill="#6b5748"/><path d="M27 12q8-8 14-2" fill="none" stroke="#1f1712" stroke-width="1.500"/><path d="M21 21q-3 12 3 24" fill="none" stroke="#fff" stroke-width="1.500"/><circle cx="40" cy="39" r="10.500" fill="#68b3bf"/><text x="40" y="44" text-anchor="middle" font-size="12" font-weight="500" fill="#fff">CE</text>`,
  chrome: svg`${tile("#f6f6f6")}<g transform="translate(28 28) scale(1.200)"><path d=${CHROME_PART} fill="#d94f3d"/><path d=${CHROME_PART} transform="rotate(120)" fill="#f3bc45"/><path d=${CHROME_PART} transform="rotate(240)" fill="#469b55"/><circle r="9.800" fill="#fff"/><circle r="8" fill="#3f7ee0"/></g>`,
  ball: svg`${ball(-2, -2, 1)}`,
  terminal: svg`${tile("#9b9da0")}<rect x="2" y="2" width="52" height="52" rx="11" fill="#050505"/><rect x="5" y="5" width="46" height="45" rx="8" fill="#262626"/><path d="M10 11l5 4-5 4M19 21h8" fill="none" stroke="#fff" stroke-width="2"/>`,
  pg: svg`${tile("url(#pgbg)")}<g transform="translate(-1 -9)"><path d=${ELEPHANT} fill="#3f6a94" stroke="#fff" stroke-width=".8"/><path d="M21 21q-5 8 0 18M36 21q4 8 0 16l-4 3" fill="none" stroke="#dfe8f0" stroke-width="1.500"/></g>`,
  telegram: svg`${tile("#f5f6f8")}<circle cx="28" cy="28" r="24" fill="url(#tele)"/><path d="M12 28L42 16l-5 26-9-7-5 5-1-9z" fill="#fff"/><path d="M22 31l15-11-12 13-2 7z" fill="#b9d8ee"/>`,
  stickies: svg`${tile("#d8c66a")}<path d="M13 0h30q13 0 13 13v20Q52 50 36 50H13Q0 50 0 37V13Q0 0 13 0z" fill="#faf0a0"/><path d="M10 19q4-13 6-9t0 10q6-12 7-6t1 3q4-6 5 0l18-1M10 27h37M10 37h19" fill="none" stroke="#d9c660" stroke-width="3"/>`,
};

const GROUP_A: [string, boolean][] = [["finder", true], ["launchpad", false], ["safari", false], ["messages", false], ["mail", false], ["maps", true], ["photos", false], ["facetime", false], ["calendar", false], ["contacts", false], ["reminders", false], ["notes", true], ["tv", false], ["music", false], ["podcasts", false], ["store", false], ["settings", false]];
const GROUP_B = ["textedit", "idea", "beaver", "chrome", "ball", "terminal", "pg", "telegram", "stickies"];

const code = (x: number, y: number, rows: number, max: number, color: string, step = 2) =>
  Array.from({ length: rows }, (_, i) => svg`<rect x=${x + ((i * 5) % 3) * 2} y=${y + i * step} width=${4 + ((i * 7) % max)} height="1" fill=${color} opacity=".55"/>`);
const badge = (art: SVGTemplateResult) => svg`<g transform="translate(43 27) scale(.39)">${art}</g>`;

const MINIS: SVGTemplateResult[] = [
  svg`<rect y="0" width="66" height="33" fill="#1b1626"/><rect width="11" height="33" fill="#292236"/>${Array.from({ length: 24 }, (_, i) => svg`<rect x=${14 + (i % 6) * 9} y=${6 + Math.floor(i / 6) * 8} width="4" height="4" rx="1" fill=${["#aaa", "#d9685a", "#5fd05f", "#5ab4ea", "#e8e8e8", "#c98"][(i * 5 + Math.floor(i / 6)) % 6]}/>`)}${badge(finder)}`,
  svg`<rect y="-1" width="66" height="36" fill="#1f2124"/><rect y="-1" width="24" height="36" fill="#2b2d30"/><rect y="-1" width="66" height="2" fill="#3d4a35"/>${code(4, 4, 13, 7, "#6b6d70")}${code(30, 4, 5, 14, "#9a7a4f", 3)}${code(32, 20, 5, 12, "#5f7a8a", 3)}<rect y="18" width="24" height="1" fill="#7a5a2a"/>${badge(idea)}`,
  svg`<rect y="-1" width="66" height="36" fill="#1f2124"/><rect y="-1" width="24" height="36" fill="#2b2d30"/><rect y="-1" width="66" height="2" fill="#5a3540"/>${code(4, 3, 14, 9, "#6b6d70")}${code(30, 5, 12, 17, "#777a6a")}<rect y="20" width="24" height="1" fill="#7a5a2a"/>${badge(idea)}`,
  svg`<rect y="1" width="66" height="32" rx="1" fill="#e3e6e6"/><rect y="6" width="66" height="22" fill="#2f86a3"/><rect x="2" y="8" width="62" height="18" rx="1" fill="#fff"/><circle cx="3" cy="3" r="1" fill="#e55"/><circle cx="6" cy="3" r="1" fill="#ea3"/><circle cx="9" cy="3" r="1" fill="#5b5"/><rect x="4" y="13" width="9" height="7" fill="#c98b3a"/><path d="M6 13q0-4 2-4t3 4" fill="none" stroke="#8a8a8a"/><rect x="15" y="17" width="36" height="3" fill="#8fb8e8"/><rect x="48" y="17" width="3" height="3" fill="#2f6fe0"/><rect x="27" y="2" width="12" height="1" fill="#777"/><rect x="15" y="10" width="5" height="1" fill="#555"/><g transform="translate(43 27) scale(.370)">${ball(0, 0, 1)}</g>`,
  svg`<rect y="1" width="66" height="32" fill="#1d1828"/><rect y="1" width="11" height="32" fill="#2b2438"/>${Array.from({ length: 12 }, (_, i) => svg`<path d="M13 ${8 + i * 2}h${14 + (i * 5) % 9}M34 ${8 + i * 2}h7M44 ${8 + i * 2}h5M53 ${8 + i * 2}h10" stroke="#8a8496" stroke-width=".8"/>`)}${badge(finder)}`,
  svg`<rect y="-1" width="66" height="36" fill="#26292c"/><rect x="24" y="3" width="40" height="18" fill="#1b1d20"/><rect y="-1" width="66" height="2" fill="#3a4650"/>${code(4, 4, 14, 6, "#6b6d70")}${code(28, 5, 4, 13, "#7a7c6a", 3)}${badge(idea)}`,
  svg`<rect y="-3" width="66" height="40" fill="#1a1a1a"/><path d="M1-2h3" stroke="#e55"/><path d="M27-2h10" stroke="#ccc"/>${code(3, 2, 15, 19, "#b5b5b5")}${badge(sheet)}`,
  svg`<rect y="-3" width="66" height="40" fill="#1a1a1a"/><path d="M1-2h3" stroke="#e55"/><path d="M27-2h10" stroke="#ccc"/>${code(3, 2, 17, 15, "#c0c0c0")}<rect x="2" y="24" width="20" height="11" fill="#7a7a7a" opacity=".6"/>${badge(sheet)}`,
];

@customElement("app-dock")
class AppDock extends LitElement {
  static styles = css`
    :host { display: flex; box-sizing: border-box; margin: 20px 57px 10px; height: 92px; padding: 0 3px; border: 2px solid rgba(160, 140, 200, 0.32); border-radius: 26px; font-family: ${UI};
      background: linear-gradient(90deg, #1a1230 0%, #22122a 24%, #1e1238 38%, #231446 55%, #44165e 68%, #43165f 76%, #2c144c 85%, #20153e 100%); }
    button { all: unset; flex: 1; display: flex; flex-direction: column; align-items: center; padding-top: 13px; }
    svg { display: block; overflow: visible; }
    .dot { width: 8px; height: 8px; margin-top: 9px; border-radius: 50%; background: #a294c8; }
    .sep { width: 2px; margin: 10px 16px; background: rgba(180, 160, 215, 0.5); }
    .defs { position: absolute; }
  `;
  icon(name: string, running: boolean) {
    return html`<button aria-label=${name}><svg width="56" height="56" viewBox="0 0 56 56">${DOCK[name]}</svg>${running ? html`<span class="dot"></span>` : nothing}</button>`;
  }
  render() {
    return html`
      <svg class="defs" width="0" height="0"><defs>
        ${arc("blue", ["#4fc0fb", "#2b6df0"])}${arc("paper", ["#f3f3f5", "#cfd9e6"])}${arc("safari", ["#3fa9f5", "#2e6fd8"])}${arc("green", ["#8cf283", "#50bb43"])}${arc("snow", ["#ffffff", "#d2ecce"])}
        ${arc("mail", ["#3675ee", "#5cc6fb"])}${arc("leather", ["#b58f57", "#9a6f3f"])}${arc("red", ["#ea6070", "#e8384a"])}${arc("violet", ["#c070ee", "#7330b8"])}${arc("store", ["#4eb4f3", "#2864de"])}
        ${arc("steel", ["#dde6ea", "#8f8c89"])}${arc("idea", ["#3fa8f0", "#2b6de8", "#3aa0e8"], false)}${arc("pgbg", ["#ebeef2", "#c3ccd8"])}${arc("tele", ["#5cbcf2", "#3a8ed0"])}${arc("can", ["#55585b", "#8f9294", "#5a5d60"], false)}
      </defs></svg>
      ${GROUP_A.map(([n, r]) => this.icon(n, r))}
      <span class="sep"></span>
      ${GROUP_B.map((n) => this.icon(n, true))}
      <span class="sep"></span>
      <button aria-label="Downloads"><svg width="56" height="56" viewBox="0 0 56 56"><path d="M10-6h36v40H10z" fill="#f0efe9"/><path d="M12-4h32v20H12z" fill="#a59a80"/><path d="M7 3h21l21 16v41H7z" fill="#f6f6f6"/><path d="M32-2l17 22q-8-2-14 0-2-9-3-22z" fill="#e2e2e2" stroke="#bbb" stroke-width=".6"/></svg></button>
      ${MINIS.map((m) => html`<button aria-label="Window"><svg width="66" height="56" viewBox="0 -12 66 56">${m}</svg></button>`)}
      <button aria-label="Trash"><svg width="56" height="56" viewBox="0 0 56 56"><path d="M4 2l48 0-5 50q-1 7-8 7H17q-7 0-8-7z" fill="url(#can)" opacity=".9"/><path d="M5 4l4-6 6-2 4-3 7 4 8-3 6 5 7-2 4 6q-22 8-46 1z" fill="#e5e5e2"/><path d="M12 3l6-7 3 8M28 2l4-6 5 8M40 3l4-5" stroke="#666" fill="none" stroke-width="1.500"/><path d="M22-2l5 3-3 4z" fill="#4fc09a"/><path d="M33 1l6 2-2 3z" fill="#d9904a"/><ellipse cx="28" cy="3" rx="24" ry="4" fill="none" stroke="#c3c6c8"/></svg></button>`;
  }
}

/* ---------- desktop ---------- */

@customElement("app-root")
class AppRoot extends LitElement {
  static styles = css`
    :host { display: flex; flex-direction: column; min-height: 100vh;
      background:
        linear-gradient(90deg, #371463 0%, #4a1c66 4%, #571f68 16%, #6b2563 23%, transparent 23%) top / 100% 90px no-repeat,
        linear-gradient(90deg, #3a30b8 23%, #2c22b0 38%, #28189a 60%, #2a1483 78%, #260f6c 100%) top / 100% 90px no-repeat,
        linear-gradient(90deg, #0b0322 0%, #0d0436 45%, #12073d 64%, #4b1268 66%, #4b1268 76%, #220b48 88%, #0d0430 100%) bottom / 100% 10px no-repeat,
        linear-gradient(90deg, #0c0422 0%, #05030d 12%, #080319 58%, #2a0b3a 60%, #2a0d45 80%, #07031a 88%, #12063a 100%) bottom / 100% 160px no-repeat,
        #1c1050; }
    .window { position: relative; flex: 1; display: flex; flex-direction: column; margin-top: 20px; border-radius: 22px; overflow: hidden; background: #fff; box-shadow: 0 0 0 1px #000; }
    .window::after { content: ""; position: absolute; inset: 0; border: 2px solid rgba(255, 255, 255, 0.2); border-radius: 22px; pointer-events: none; }
    joins-page { flex: 1; }
  `;
  render() {
    return html`
      <menu-bar></menu-bar>
      <div class="window"><tab-strip></tab-strip><tool-bar></tool-bar><joins-page></joins-page><download-shelf></download-shelf></div>
      <app-dock></app-dock>`;
  }
}
